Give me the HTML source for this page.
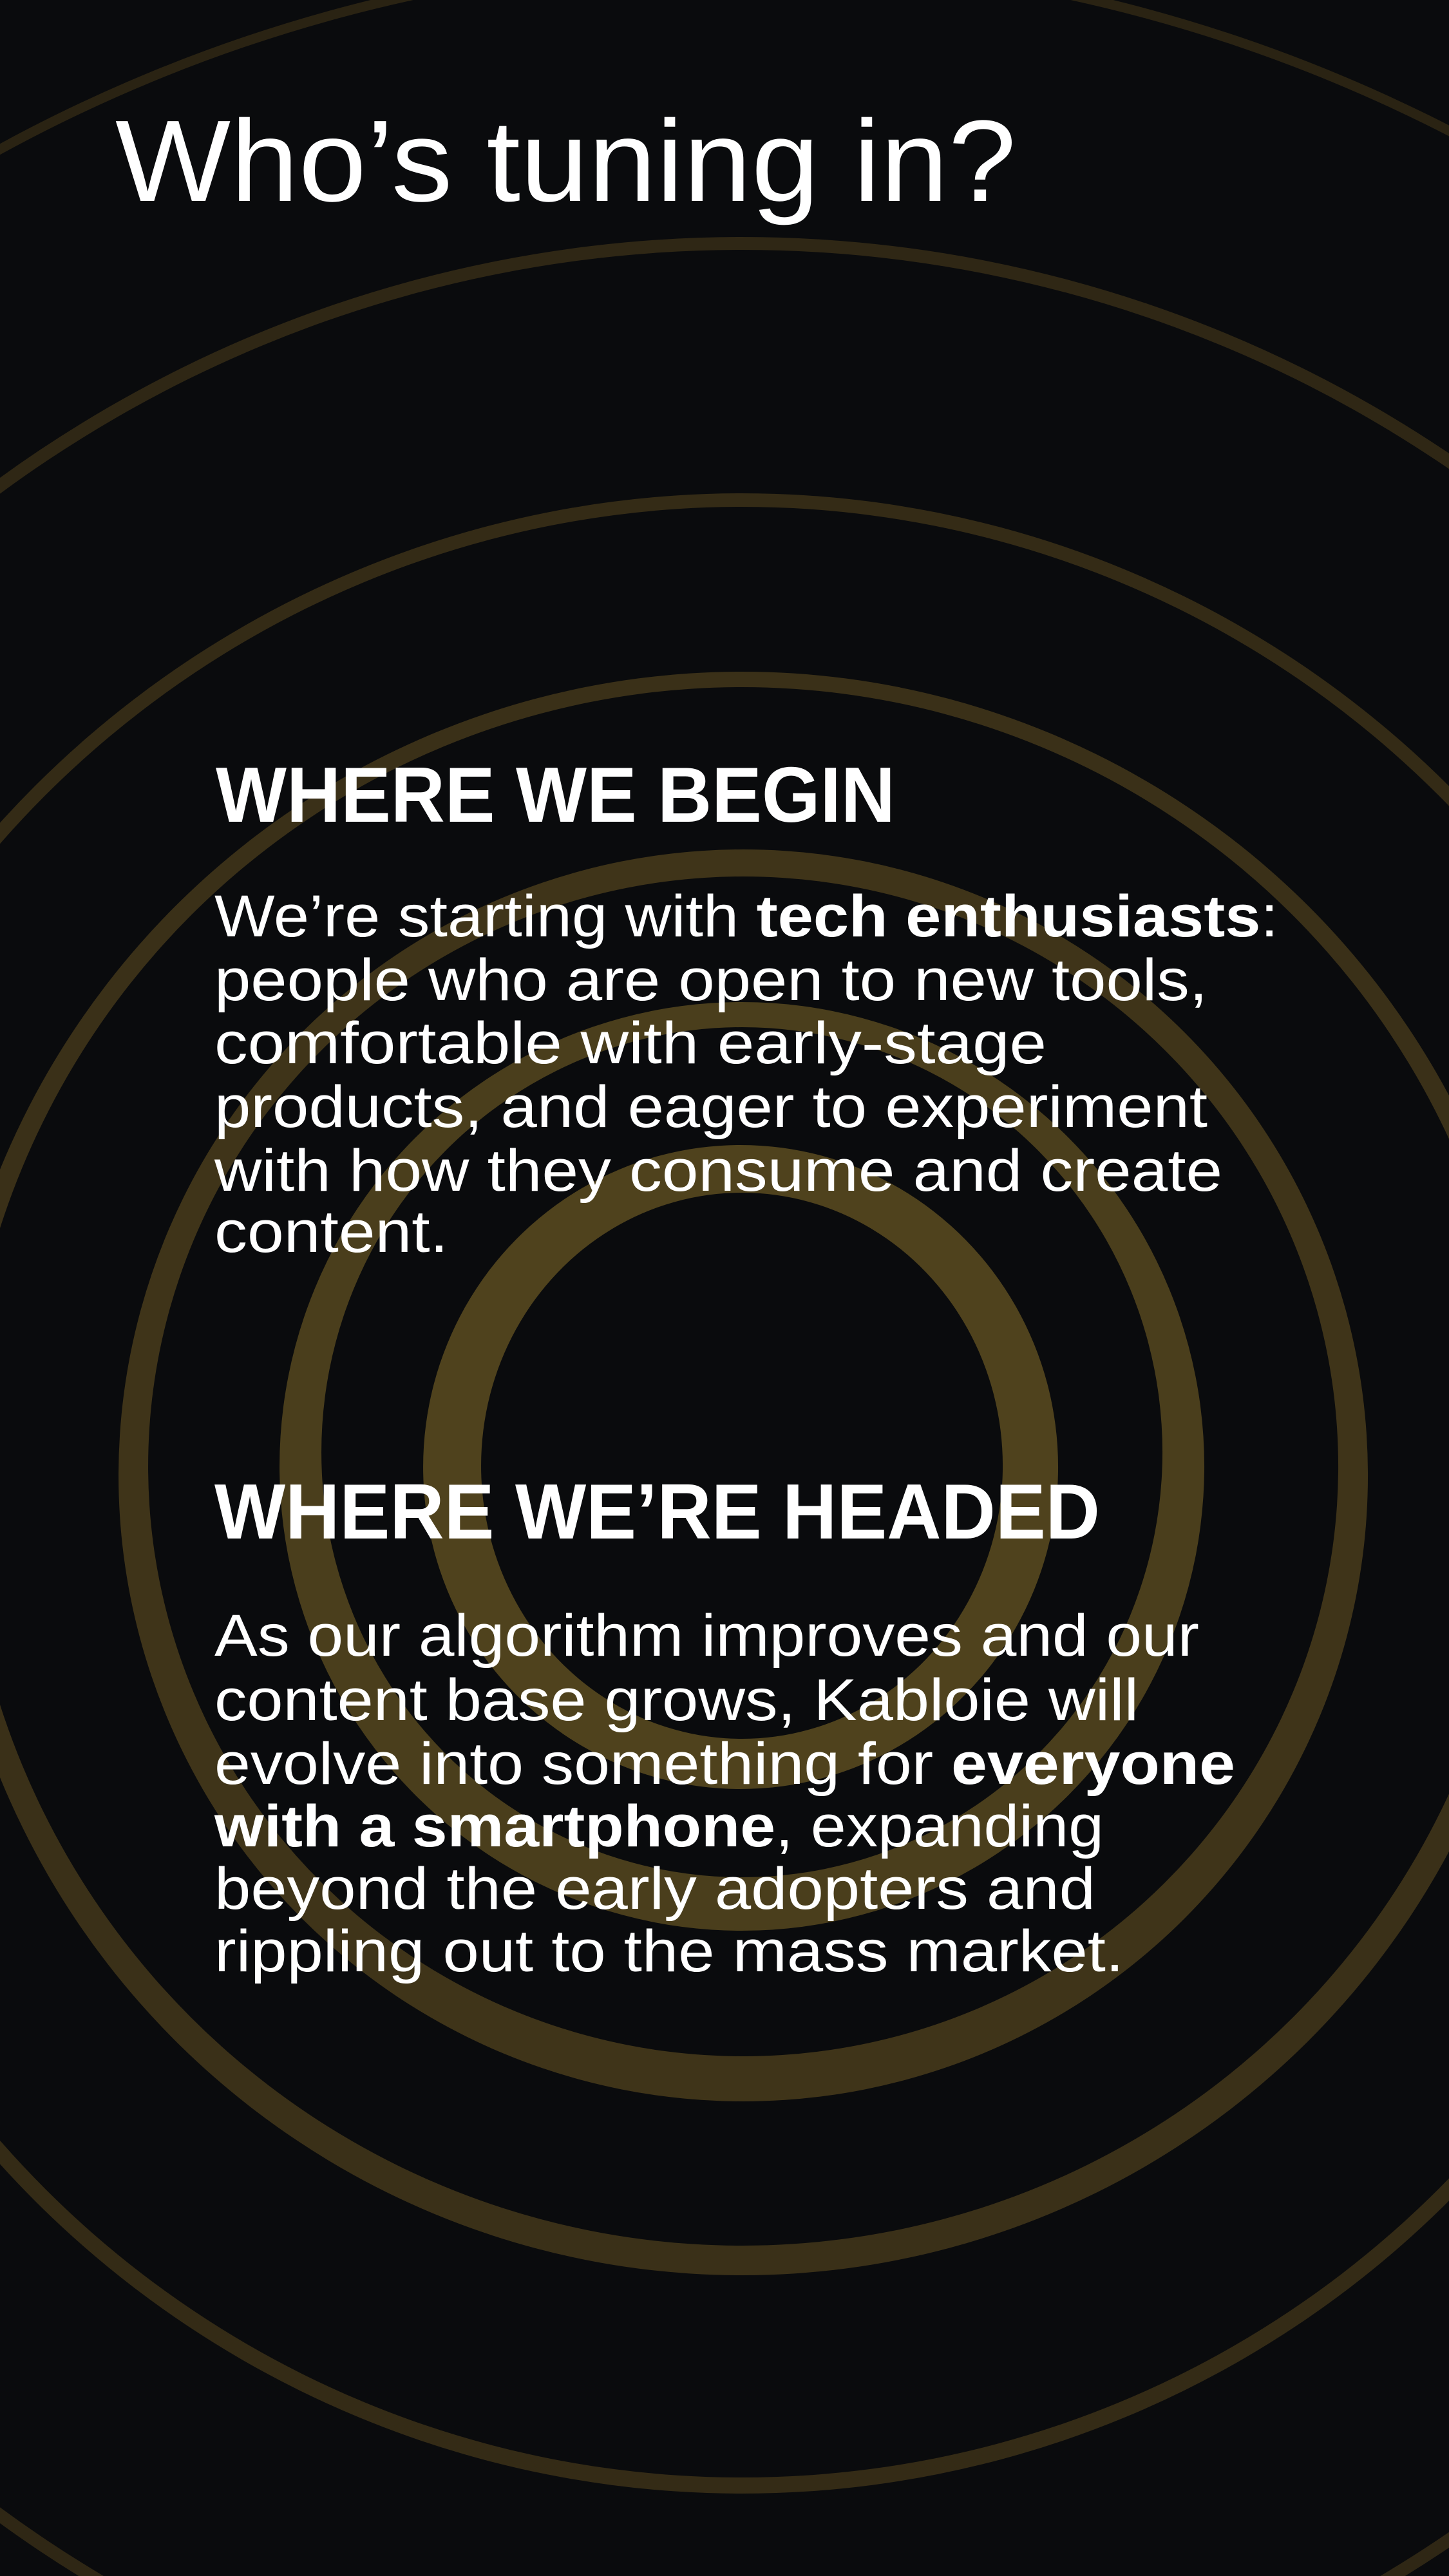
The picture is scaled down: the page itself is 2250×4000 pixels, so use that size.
<!DOCTYPE html>
<html><head><meta charset="utf-8"><style>
html,body{margin:0;padding:0;background:#0a0b0d;width:2250px;height:4000px;overflow:hidden;}
svg{display:block;position:absolute;top:0;left:0;}
text{font-family:"Liberation Sans",sans-serif;fill:#fff;}
</style></head><body>
<svg width="2250" height="4000" viewBox="0 0 2250 4000" xmlns="http://www.w3.org/2000/svg">
<rect width="2250" height="4000" fill="#0a0b0d"/>
<g fill-rule="evenodd">
<path fill="#2a2313" d="M1152,-70 a2410,2410 0 1,0 0.1,0 Z M1152,-55 a2395,2395 0 1,0 0.1,0 Z"/>
<path fill="#2f2715" d="M1152,368 a1962,1962 0 1,0 0.1,0 Z M1152,388 a1942,1942 0 1,0 0.1,0 Z"/>
<path fill="#342b16" d="M1152,766 a1553,1553 0 1,0 0.1,0 Z M1152,787 a1530,1530 0 1,0 0.1,0 Z"/>
<path fill="#3a3018" d="M1152,1043 a1245,1245 0 1,0 0.1,0 Z M1152,1067 a1210,1210 0 1,0 0.1,0 Z"/>
<path fill="#3f3419" d="M1154,1319 a970,972 0 1,0 0.1,0 Z M1154,1361 a924,916 0 1,0 0.1,0 Z"/>
<path fill="#4a3e1c" d="M1152,1556 a718,721 0 1,0 0.1,0 Z M1152,1595 a653,660 0 1,0 0.1,0 Z"/>
<path fill="#4f421d" d="M1150,1778 a493,500 0 1,0 0.1,0 Z M1152,1852 a405,424 0 1,0 0.1,0 Z"/>
</g>

<text x="179" y="312" font-size="180" textLength="1399" lengthAdjust="spacingAndGlyphs">Who’s tuning in?</text>

<text x="335" y="1276" font-size="122" font-weight="bold" textLength="1055" lengthAdjust="spacingAndGlyphs">WHERE WE BEGIN</text>

<g font-size="92">
<text x="333" y="1454" textLength="1652" lengthAdjust="spacingAndGlyphs">We’re starting with <tspan font-weight="bold">tech enthusiasts</tspan>:</text>
<text x="333" y="1553" textLength="1542" lengthAdjust="spacingAndGlyphs">people who are open to new tools,</text>
<text x="333" y="1651" textLength="1292" lengthAdjust="spacingAndGlyphs">comfortable with early-stage</text>
<text x="333" y="1750" textLength="1542" lengthAdjust="spacingAndGlyphs">products, and eager to experiment</text>
<text x="333" y="1849" textLength="1565" lengthAdjust="spacingAndGlyphs">with how they consume and create</text>
<text x="333" y="1944" textLength="363" lengthAdjust="spacingAndGlyphs">content.</text>
</g>

<text x="333" y="2389" font-size="122" font-weight="bold" textLength="1375" lengthAdjust="spacingAndGlyphs">WHERE WE’RE HEADED</text>

<g font-size="92">
<text x="333" y="2571" textLength="1529" lengthAdjust="spacingAndGlyphs">As our algorithm improves and our</text>
<text x="333" y="2671" textLength="1435" lengthAdjust="spacingAndGlyphs">content base grows, Kabloie will</text>
<text x="333" y="2770" textLength="1585" lengthAdjust="spacingAndGlyphs">evolve into something for <tspan font-weight="bold">everyone</tspan></text>
<text x="333" y="2867" textLength="1381" lengthAdjust="spacingAndGlyphs"><tspan font-weight="bold">with a smartphone</tspan>, expanding</text>
<text x="333" y="2964" textLength="1368" lengthAdjust="spacingAndGlyphs">beyond the early adopters and</text>
<text x="333" y="3061" textLength="1412" lengthAdjust="spacingAndGlyphs">rippling out to the mass market.</text>
</g>
</svg>
</body></html>
